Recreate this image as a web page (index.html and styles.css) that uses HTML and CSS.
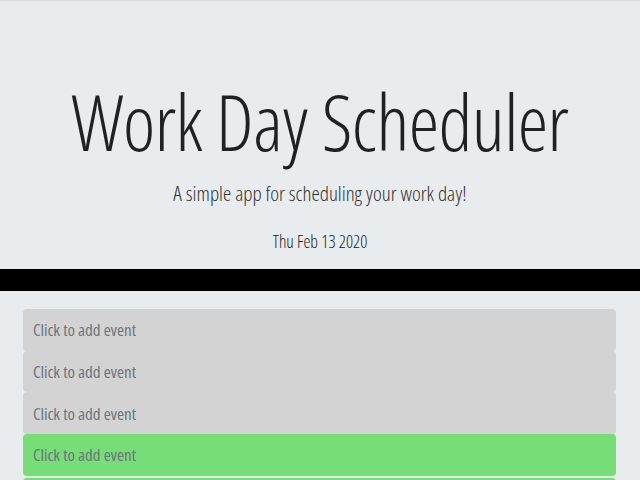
FILE: index.html
```html
<!DOCTYPE html>
<html lang="en">
<head>
<meta charset="utf-8">
<title>Work Day Scheduler</title>
<link rel="stylesheet" href="styles.css">
</head>
<body>
<header class="jumbotron">
  <h1 class="display">Work Day Scheduler</h1>
  <p class="lead">A simple app for scheduling your work day!</p>
  <p class="current-day">Thu Feb 13 2020</p>
</header>
<main class="container">
  <div class="time-block past"><span class="description">Click to add event</span></div>
  <div class="time-block past"><span class="description">Click to add event</span></div>
  <div class="time-block past"><span class="description">Click to add event</span></div>
  <div class="time-block future"><span class="description">Click to add event</span></div>
  <div class="time-block future"><span class="description">Click to add event</span></div>
</main>
</body>
</html>
```

FILE: styles.css
```css
html, body {
  margin: 0;
  padding: 0;
  height: 100%;
  overflow: hidden;
}

body {
  background: #e9ecef;
  font-family: "Open Sans", "Liberation Sans", sans-serif;
  font-stretch: 75%;
  color: #212529;
  border-top: 1px solid #dcdde2;
}

.jumbotron {
  display: flex;
  flex-direction: column;
  align-items: center;
  text-align: center;
  box-sizing: border-box;
  height: 290px;
  padding-top: 78px;
  border-bottom: 22px solid #000;
}

.display {
  margin: 0;
  white-space: nowrap;
  font-size: 77px;
  font-weight: 300;
  letter-spacing: -0.5px;
  line-height: 86px;
  color: #1e2125;
}

.lead {
  margin: 14px 0 0;
  white-space: nowrap;
  font-size: 21px;
  font-weight: 300;
  line-height: 28px;
  color: #333;
}

.current-day {
  margin: 21px 0 0;
  font-size: 17.5px;
  font-weight: 350;
  line-height: 26px;
  color: #1a1a1a;
}

.container {
  display: flex;
  flex-direction: column;
  margin: 18px 24px 0 23px;
}

.time-block {
  height: 41.7px;
  flex: none;
  display: flex;
  align-items: center;
  padding-left: 10px;
  border-radius: 4px;
  font-size: 17px;
  color: #6c757d;
}

.past {
  background: #d3d3d3;
}

.future {
  background: #77dd77;
}

.future + .future {
  margin-top: 2px;
}
```
